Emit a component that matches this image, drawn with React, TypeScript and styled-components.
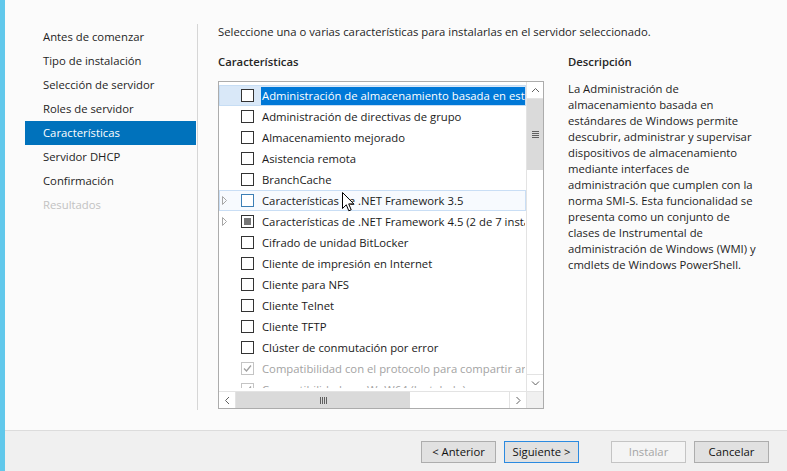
import React from 'react';
import styled, { createGlobalStyle, css } from 'styled-components';

const GlobalStyle = createGlobalStyle`
  html, body { margin: 0; padding: 0; background: #fbfbfb; }
  body {
    font-family: "Open Sans", "Noto Sans", sans-serif;
    font-size: 11.3px;
    color: #1e1e1e;
  }
  * { box-sizing: border-box; }
`;

const Window = styled.div`
  position: relative;
  width: 787px;
  height: 471px;
  display: flex;
  overflow: hidden;
  background: #fbfbfb;
`;

const Strip = styled.div`
  flex: none;
  width: 5px;
  background: #61c8eb;
`;

const Main = styled.div`
  flex: 1;
  min-width: 0;
  display: flex;
  flex-direction: column;
`;

const Body = styled.div`
  flex: 1;
  display: flex;
  min-height: 0;
`;

const Nav = styled.nav`
  flex: none;
  width: 192px;
  padding: 25px 1px 0 20px;
  display: flex;
  flex-direction: column;
`;

const NavItem = styled.div<{ $active?: boolean; $disabled?: boolean }>`
  height: 24px;
  line-height: 24px;
  padding-left: 18px;
  white-space: nowrap;
  color: ${(p) => (p.$disabled ? '#c2c2c2' : p.$active ? '#ffffff' : '#1e1e1e')};
  background: ${(p) => (p.$active ? '#0072bc' : 'transparent')};
`;

const Divider = styled.div`
  flex: none;
  width: 1px;
  margin: 24px 0 20px;
  background: #d6d6d6;
`;

const Panel = styled.section`
  flex: 1;
  padding: 24px 0 0 20px;
  display: flex;
  flex-direction: column;
`;

const Intro = styled.div`
  line-height: 16px;
  white-space: nowrap;
`;

const Columns = styled.div`
  display: flex;
  gap: 24px;
  margin-top: 14px;
`;

const Column = styled.div<{ $width: number }>`
  flex: none;
  width: ${(p) => p.$width}px;
  display: flex;
  flex-direction: column;
`;

const ColumnTitle = styled.div`
  line-height: 16px;
  font-weight: 600;
  color: #262626;
  margin-bottom: 11px;
`;

const ListBox = styled.div`
  width: 326px;
  height: 328px;
  border: 1px solid #acacac;
  background: #ffffff;
  display: grid;
  grid-template-columns: 1fr 17px;
  grid-template-rows: 1fr 17px;
`;

const Viewport = styled.div`
  overflow: hidden;
  padding-top: 3px;
  margin-bottom: 3px;
  min-width: 0;
`;

type RowState = 'selected' | 'hover' | undefined;

const Row = styled.div<{ $state?: RowState }>`
  height: 21px;
  display: flex;
  align-items: center;
  white-space: nowrap;
  overflow: hidden;
  border: 1px solid transparent;
  ${(p) =>
    p.$state === 'selected' &&
    css`
      background: #d9e8f8;
      border-color: #c6ddf4;
    `}
  ${(p) =>
    p.$state === 'hover' &&
    css`
      background: #f7fafe;
      border-color: #c9def5;
    `}
`;

const Expander = styled.span`
  flex: none;
  width: 21px;
  height: 19px;
  display: flex;
  align-items: center;
  padding-left: 2px;
`;

type BoxKind = 'empty' | 'hover' | 'partial' | 'disabledChecked';

const Box = styled.span<{ $kind: BoxKind }>`
  flex: none;
  width: 13px;
  height: 13px;
  display: flex;
  align-items: center;
  justify-content: center;
  background: #ffffff;
  border: 1px solid
    ${(p) => (p.$kind === 'hover' ? '#3d7fb5' : p.$kind === 'disabledChecked' ? '#c4c4c4' : '#333333')};
`;

const PartialFill = styled.span`
  width: 7px;
  height: 7px;
  background: #777777;
`;

const Label = styled.span<{ $selected?: boolean; $disabled?: boolean }>`
  margin-left: 7px;
  padding: 0 1px;
  line-height: 18px;
  color: ${(p) => (p.$selected ? '#ffffff' : p.$disabled ? '#a3a3a3' : '#1a1a1a')};
  background: ${(p) => (p.$selected ? '#0078d7' : 'transparent')};
`;

const VScroll = styled.div`
  border-left: 1px solid #e3e3e3;
  display: flex;
  flex-direction: column;
  background: #ffffff;
`;

const HScroll = styled.div`
  border-top: 1px solid #e3e3e3;
  display: flex;
  background: #ffffff;
`;

const ArrowBtn = styled.div<{ $side: 'top' | 'bottom' | 'left' | 'right' }>`
  flex: none;
  width: 16px;
  height: 16px;
  display: flex;
  align-items: center;
  justify-content: center;
  background: #ffffff;
  ${(p) => p.$side === 'top' && css`border-bottom: 1px solid #e3e3e3; height: 17px;`}
  ${(p) => p.$side === 'bottom' && css`border-top: 1px solid #e3e3e3; height: 17px;`}
  ${(p) => p.$side === 'left' && css`border-right: 1px solid #e3e3e3; width: 17px;`}
  ${(p) => p.$side === 'right' && css`border-left: 1px solid #e3e3e3; width: 17px;`}
`;

const Track = styled.div<{ $dir: 'v' | 'h' }>`
  flex: 1;
  display: flex;
  flex-direction: ${(p) => (p.$dir === 'v' ? 'column' : 'row')};
`;

const Thumb = styled.div<{ $size: number; $dir: 'v' | 'h' }>`
  flex: none;
  ${(p) => (p.$dir === 'v' ? `height: ${p.$size}px;` : `width: ${p.$size}px;`)}
  background: #dadada;
  display: flex;
  align-items: center;
  justify-content: center;
`;

const Corner = styled.div`
  background: #f0f0f0;
  border-left: 1px solid #e3e3e3;
  border-top: 1px solid #e3e3e3;
`;

const Description = styled.div`
  line-height: 16px;
  color: #1e1e1e;
  white-space: nowrap;
`;

const Line = styled.div``;

const Footer = styled.footer`
  flex: none;
  height: 41px;
  border-top: 1px solid #dcdcdc;
  background: #f0f0f0;
  display: flex;
  justify-content: flex-end;
  align-items: flex-start;
  gap: 8px;
  padding: 10px 18px 0 0;
`;

const Button = styled.button<{ $variant?: 'default' | 'primary' | 'disabled'; $gapBefore?: number }>`
  width: 75px;
  height: 22px;
  padding: 0;
  margin-left: ${(p) => p.$gapBefore ?? 0}px;
  font-family: inherit;
  font-size: 11.3px;
  line-height: 20px;
  color: ${(p) => (p.$variant === 'disabled' ? '#a5a5a5' : '#111111')};
  background: ${(p) => (p.$variant === 'disabled' ? '#f4f4f4' : '#e1e1e1')};
  border: 1px solid
    ${(p) => (p.$variant === 'primary' ? '#2b8ae0' : p.$variant === 'disabled' ? '#c4c4c4' : '#adadad')};
`;

const Cursor = styled.svg`
  position: absolute;
  left: 342px;
  top: 192px;
  pointer-events: none;
`;

const Chevron = ({ dir }: { dir: 'up' | 'down' | 'left' | 'right' }) => {
  const paths: Record<string, string> = {
    up: 'M1 5 L4.5 1.5 L8 5',
    down: 'M1 1.5 L4.5 5 L8 1.5',
    left: 'M5 1 L1.5 4.5 L5 8',
    right: 'M1.5 1 L5 4.5 L1.5 8',
  };
  const horizontal = dir === 'up' || dir === 'down';
  return (
    <svg width={horizontal ? 9 : 7} height={horizontal ? 7 : 9} viewBox={horizontal ? '0 0 9 7' : '0 0 7 9'}>
      <path d={paths[dir]} fill="none" stroke="#606060" strokeWidth="1" />
    </svg>
  );
};

const Grip = ({ dir }: { dir: 'v' | 'h' }) => (
  <svg width={7} height={7} viewBox="0 0 7 7">
    {[0, 2, 4, 6].map((o) =>
      dir === 'v' ? (
        <rect key={o} x={0} y={o} width={7} height={1} fill="#606060" />
      ) : (
        <rect key={o} x={o} y={0} width={1} height={7} fill="#606060" />
      )
    )}
  </svg>
);

const Triangle = () => (
  <svg width="6" height="9" viewBox="0 0 6 9">
    <path d="M0.5 0.5 L4.5 4.5 L0.5 8.5 Z" fill="none" stroke="#a6a6a6" strokeWidth="1" />
  </svg>
);

const Check = () => (
  <svg width="11" height="11" viewBox="0 0 11 11">
    <path d="M2 5.5 L4.5 8 L9 2.5" fill="none" stroke="#a0a0a0" strokeWidth="1.3" />
  </svg>
);

type Item = {
  text: string;
  expandable?: boolean;
  state?: RowState;
  box: BoxKind;
  disabled?: boolean;
};

const items: Item[] = [
  { text: 'Administración de almacenamiento basada en estándares', state: 'selected', box: 'empty' },
  { text: 'Administración de directivas de grupo', box: 'empty' },
  { text: 'Almacenamiento mejorado', box: 'empty' },
  { text: 'Asistencia remota', box: 'empty' },
  { text: 'BranchCache', box: 'empty' },
  { text: 'Características de .NET Framework 3.5', expandable: true, state: 'hover', box: 'hover' },
  { text: 'Características de .NET Framework 4.5 (2 de 7 instalados)', expandable: true, box: 'partial' },
  { text: 'Cifrado de unidad BitLocker', box: 'empty' },
  { text: 'Cliente de impresión en Internet', box: 'empty' },
  { text: 'Cliente para NFS', box: 'empty' },
  { text: 'Cliente Telnet', box: 'empty' },
  { text: 'Cliente TFTP', box: 'empty' },
  { text: 'Clúster de conmutación por error', box: 'empty' },
  { text: 'Compatibilidad con el protocolo para compartir archivos SMB 1.0/CIFS (Instalado)', box: 'disabledChecked', disabled: true },
  { text: 'Compatibilidad con WoW64 (Instalado)', box: 'disabledChecked', disabled: true },
];

const navItems = [
  'Antes de comenzar',
  'Tipo de instalación',
  'Selección de servidor',
  'Roles de servidor',
  'Características',
  'Servidor DHCP',
  'Confirmación',
  'Resultados',
];

const descLines = [
  'La Administración de',
  'almacenamiento basada en',
  'estándares de Windows permite',
  'descubrir, administrar y supervisar',
  'dispositivos de almacenamiento',
  'mediante interfaces de',
  'administración que cumplen con la',
  'norma SMI-S. Esta funcionalidad se',
  'presenta como un conjunto de',
  'clases de Instrumental de',
  'administración de Windows (WMI) y',
  'cmdlets de Windows PowerShell.',
];

export default function App() {
  return (
    <>
      <GlobalStyle />
      <Window>
        <Strip />
        <Main>
          <Body>
            <Nav>
              {navItems.map((n, i) => (
                <NavItem key={n} $active={i === 4} $disabled={i === 7}>
                  {n}
                </NavItem>
              ))}
            </Nav>
            <Divider />
            <Panel>
              <Intro>Seleccione una o varias características para instalarlas en el servidor seleccionado.</Intro>
              <Columns>
                <Column $width={326}>
                  <ColumnTitle>Características</ColumnTitle>
                  <ListBox>
                    <Viewport>
                      {items.map((it) => (
                        <Row key={it.text} $state={it.state}>
                          <Expander>{it.expandable ? <Triangle /> : null}</Expander>
                          <Box $kind={it.box}>
                            {it.box === 'partial' ? <PartialFill /> : null}
                            {it.box === 'disabledChecked' ? <Check /> : null}
                          </Box>
                          <Label $selected={it.state === 'selected'} $disabled={it.disabled}>
                            {it.text}
                          </Label>
                        </Row>
                      ))}
                    </Viewport>
                    <VScroll>
                      <ArrowBtn $side="top">
                        <Chevron dir="up" />
                      </ArrowBtn>
                      <Track $dir="v">
                        <Thumb $dir="v" $size={71}>
                          <Grip dir="v" />
                        </Thumb>
                      </Track>
                      <ArrowBtn $side="bottom">
                        <Chevron dir="down" />
                      </ArrowBtn>
                    </VScroll>
                    <HScroll>
                      <ArrowBtn $side="left">
                        <Chevron dir="left" />
                      </ArrowBtn>
                      <Track $dir="h">
                        <Thumb $dir="h" $size={174}>
                          <Grip dir="h" />
                        </Thumb>
                      </Track>
                      <ArrowBtn $side="right">
                        <Chevron dir="right" />
                      </ArrowBtn>
                    </HScroll>
                    <Corner />
                  </ListBox>
                </Column>
                <Column $width={212}>
                  <ColumnTitle>Descripción</ColumnTitle>
                  <Description>
                    {descLines.map((l) => (
                      <Line key={l}>{l}</Line>
                    ))}
                  </Description>
                </Column>
              </Columns>
            </Panel>
          </Body>
          <Footer>
            <Button $variant="default">&lt; Anterior</Button>
            <Button $variant="primary">Siguiente &gt;</Button>
            <Button $variant="disabled" $gapBefore={24}>
              Instalar
            </Button>
            <Button $variant="default">Cancelar</Button>
          </Footer>
        </Main>
        <Cursor width="13" height="22" viewBox="0 0 13 22">
          <path
            d="M0.5 0.5 L0.5 16.5 L4.3 12.8 L6.8 18.8 L9.2 17.8 L6.7 11.9 L11.8 11.9 Z"
            fill="#ffffff"
            stroke="#000000"
            strokeWidth="1"
            strokeLinejoin="miter"
          />
        </Cursor>
      </Window>
    </>
  );
}
